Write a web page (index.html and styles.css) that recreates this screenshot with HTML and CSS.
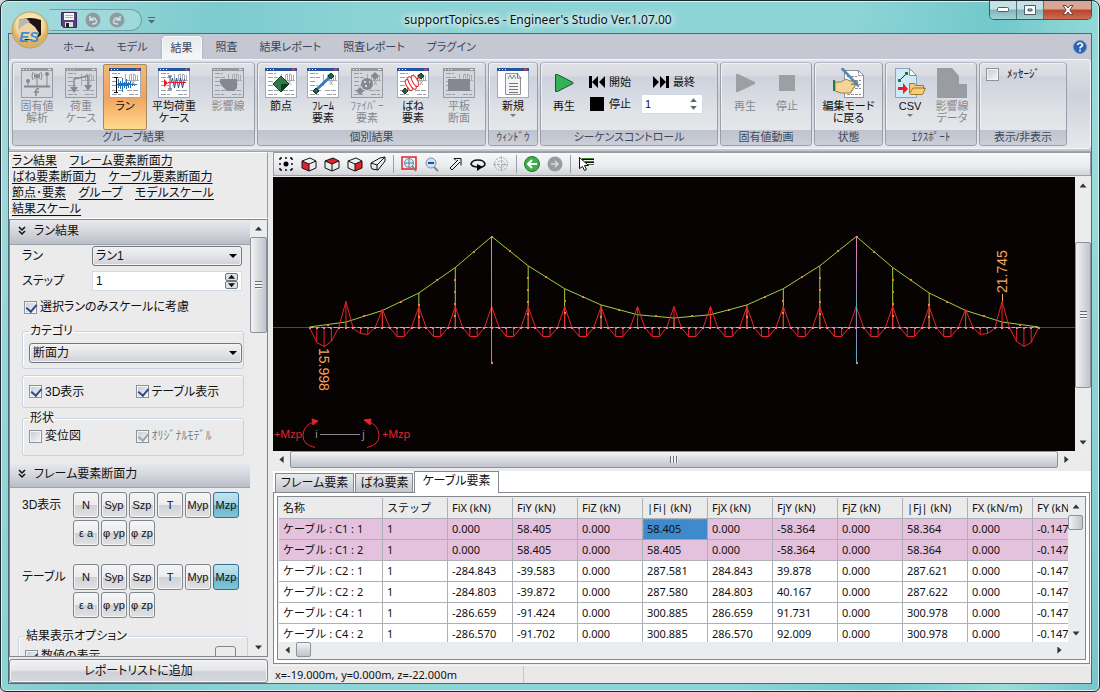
FILE: index.html
```
<!DOCTYPE html>
<html lang="ja">
<head>
<meta charset="UTF-8">
<title>supportTopics.es - Engineer's Studio Ver.1.07.00</title>
<link rel="stylesheet" href="styles.css">
</head>
<body>
<svg class="defs" aria-hidden="true">
    <defs>
        <symbol id="sheet" viewBox="0 0 32 30">
            <rect x=".5" y=".5" width="31" height="29" fill="#fff" stroke="#a3aab5"/>
            <rect width="32" height="3" fill="#24539f"/>
            <path d="M2 1.5h1M5 1.5h1M8 1.5h1" stroke="#fff"/>
            <path d="M27 1.5h3" stroke="#e8413c" stroke-width="2"/>
        </symbol>
        <symbol id="sheet-off" viewBox="0 0 32 30">
            <rect x=".5" y=".5" width="31" height="29" fill="#d4d7dd" stroke="#989ba0"/>
            <rect width="32" height="3" fill="#96999f"/>
            <path d="M2 1.5h1M5 1.5h1M8 1.5h1M27 1.5h3" stroke="#e8eaee"/>
        </symbol>
        <symbol id="notes" viewBox="0 0 32 30">
            <path d="M3 5.5h8M3 9.5h10M3 13.5h6M3 17.5h8M3 22.5h12M3 26.5h9M18 22.5h11M20 26.5h9" stroke="#9aa0a8" stroke-dasharray="5 1"/>
            <path d="M16.500 6v12M16 12.500h14M20.500 12V7l2-1v6M24.500 12V6l2 1v5M28.500 12V7M22 12l4 5M26 12l-3 5" stroke="#a6abb2" fill="none"/>
        </symbol>
        <symbol id="cube" viewBox="0 0 16 16">
            <path d="M1 5l8-3 6 3v7l-7 3-7-3zM1 5l7 3 7-3M8 8v7" fill="none" stroke="#111"/>
        </symbol>
        <symbol id="chevrons" viewBox="0 0 8 10">
            <path d="M1 1l3 3 3-3M1 5l3 3 3-3" fill="none" stroke="#111" stroke-width="1.5"/>
        </symbol>
    </defs>
</svg>
<div class="window">
    <header class="titlebar">
        <div class="quick">
            <button class="orb" title="メニュー">
                <svg width="38" height="38" viewBox="0 0 38 38">
                    <defs>
                        <radialGradient id="gold" cy=".35"><stop offset="0" stop-color="#fff6d0"/><stop offset=".75" stop-color="#f3dc9c"/><stop offset="1" stop-color="#dcb064"/></radialGradient>
                    </defs>
                    <circle cx="19" cy="19" r="18" fill="url(#gold)" stroke="#b6a06c"/>
                    <path d="M8 9q11-4 22 0v15q-5 5-16 5-6-8-6-20z" fill="#1e1312"/>
                    <path d="M7 19q1-8 8-9l4 2 5 4 4 6-3 6H10z" fill="#f0d3a4"/>
                    <path d="M8 9l7-2 4 4-6 3-6 5z" fill="#b9b6b3"/>
                    <text x="8" y="31" class="orb-text">ES</text>
                </svg>
            </button>
            <div class="quick-bar">
                <button title="保存"><svg width="16" height="16" viewBox="0 0 16 16"><path d="M.5.5h15v15h-13l-2-2z" fill="#5a3f7a" stroke="#3d2759"/><path d="M3 1h10v7H3z" fill="#f4fbf4"/><path d="M4 3.500h8M4 5.500h8" stroke="#81c995"/><path d="M4 10h8v5H4z" fill="#dcdce6"/><path d="M5 11h3v4H5z" fill="#222"/></svg></button>
                <button title="元に戻す" disabled><svg width="16" height="16" viewBox="0 0 16 16"><circle cx="8" cy="8" r="7.500" fill="#8f9ba1"/><path d="M5 4v4h4M5 8q4-4 6 0t-4 4" fill="none" stroke="#c9e4e6" stroke-width="1.500"/></svg></button>
                <button title="やり直し" disabled><svg width="16" height="16" viewBox="0 0 16 16"><circle cx="8" cy="8" r="7.500" fill="#8f9ba1"/><path d="M11 4v4H7M11 8q-4-4-6 0t4 4" fill="none" stroke="#c9e4e6" stroke-width="1.500"/></svg></button>
            </div>
            <svg width="7" height="8" viewBox="0 0 7 8"><path d="M0 1.500h7" stroke="#526b70"/><path d="M0 4h7l-3.500 3.500z" fill="#526b70"/></svg>
        </div>
        <h1 class="title">supportTopics.es - Engineer's Studio Ver.1.07.00</h1>
        <div class="controls">
            <button title="最小化"><svg width="12" height="6" viewBox="0 0 12 6"><rect x=".5" y=".5" width="11" height="4" rx="1" fill="#fff" stroke="#4b5d66"/></svg></button>
            <button title="最大化"><svg width="12" height="10" viewBox="0 0 12 10"><path d="M.5.5h11v9H.5zM4 4v2h4V4z" fill="#fff" fill-rule="evenodd" stroke="#4b5d66"/></svg></button>
            <button class="close" title="閉じる"><svg width="12" height="10" viewBox="0 0 12 10"><path d="M1 .5h3l2 2.500 2-2.500h3L7.800 5l3.200 4.500H8L6 7 4 9.500H1L4.200 5z" fill="#fff" stroke="#6b4340"/></svg></button>
        </div>
    </header>

    <div class="client">
        <nav class="tabs">
            <button>ホーム</button>
            <button>モデル</button>
            <button class="active">結果</button>
            <button>照査</button>
            <button>結果レポート</button>
            <button>照査レポート</button>
            <button>プラグイン</button>
            <button class="help" title="ヘルプ"><svg width="14" height="14" viewBox="0 0 14 14"><circle cx="7" cy="7" r="6.500" fill="#2a62b4" stroke="#6d8fbe"/><path d="M4.500 5q.5-2 2.500-2t2.500 2q0 1-1.500 1.800Q7 7.300 7 8.500M7 9.800v1.700" fill="none" stroke="#fff" stroke-width="1.700"/></svg></button>
        </nav>

        <div class="ribbon">
            <section class="group g-group">
                <div class="tools">
                    <button class="tool" disabled>
                        <svg viewBox="0 0 32 30"><use href="#sheet-off"/><g fill="none" stroke="#85888e"><path d="M3 18.500h26" stroke-width="2"/><path d="M7 18v-5M16 18V8M26 18V6M12 12q-2-4 0-8M20 12q2-4 0-8M14 11q-1-3 0-6M18 11q1-3 0-6"/><path d="M18 21q-3-1-3 2v5M13 24h5" stroke-width="1.500"/></g><g fill="#85888e"><circle cx="7" cy="13" r="2"/><circle cx="16" cy="8" r="2"/><circle cx="26" cy="6" r="2"/></g></svg>
                        <span>固有値<br>解析</span>
                    </button>
                    <button class="tool" disabled>
                        <svg viewBox="0 0 32 30"><use href="#sheet-off"/><use href="#notes"/><path d="M9 23V11l14-3v11" fill="none" stroke="#85888e" stroke-width="1.500"/><path d="M5 19h8l-4 6zM19 17h8l-4 6z" fill="#85888e"/></svg>
                        <span>荷重<br>ケース</span>
                    </button>
                    <button class="tool on">
                        <svg viewBox="0 0 32 30"><use href="#sheet"/><use href="#notes"/><path d="M5 9.500h4M5 24.500h4M7.500 9v16" stroke="#111"/><path d="M9.500 11v9M11.500 13v8M13.500 10v14M15.500 14v6M17.500 11v10M19.500 14v6M21.500 13v7M23.500 15v3M25.500 16v2" stroke="#2371b8"/><path d="M8 16.500h20M10 15.500h12M10 17.500h10" stroke="#2371b8"/></svg>
                        <span>ラン</span>
                    </button>
                    <button class="tool wide">
                        <svg viewBox="0 0 32 30"><use href="#sheet"/><use href="#notes"/><path d="M10 8h4M12 8v13M10 21h4" stroke="#34507c"/><path d="M13 15l1.500-5 2 10 2-10 2 10 2-10 2 10 2-9" fill="none" stroke="#2b4fa0"/><path d="M6 11v8l4-4z" fill="#ed1c24"/><path d="M10 14.500h18" stroke="#ed1c24"/></svg>
                        <span>平均荷重<br>ケース</span>
                    </button>
                    <button class="tool" disabled>
                        <svg viewBox="0 0 32 30"><use href="#sheet-off"/><use href="#notes"/><path d="M8 11h17v9l-3 3h-7l-4-4-3-4z" fill="#85888e"/></svg>
                        <span>影響線</span>
                    </button>
                </div>
                <h2>グループ結果</h2>
            </section>

            <section class="group g-each">
                <div class="tools">
                    <button class="tool">
                        <svg viewBox="0 0 32 30"><use href="#sheet"/><use href="#notes"/><path d="M16 8l8 8-8 8-8-8z" fill="#2d7a46" stroke="#17452a"/><path d="M16 16h8l-8 8z" fill="#123a20"/></svg>
                        <span>節点</span>
                    </button>
                    <button class="tool">
                        <svg viewBox="0 0 32 30"><use href="#sheet"/><use href="#notes"/><path d="M8 23L24 8" stroke="#3579c4" stroke-width="3"/><path d="M9 20l3 3-3 3-3-3zM24 5l3 3-3 3-3-3z" fill="#1f6337" stroke="#123a20"/></svg>
                        <span>ﾌﾚｰﾑ<br>要素</span>
                    </button>
                    <button class="tool" disabled>
                        <svg viewBox="0 0 32 30"><use href="#sheet-off"/><use href="#notes"/><g fill="#85888e"><circle cx="16" cy="16" r="6"/><path d="M9 19l4 4-4 4-4-4zM24 4l4 4-4 4-4-4z"/></g><path d="M13 14h2M18 14h1M14 18h2" stroke="#d4d7dd" stroke-width="2"/></svg>
                        <span>ﾌｧｲﾊﾞｰ<br>要素</span>
                    </button>
                    <button class="tool">
                        <svg viewBox="0 0 32 30"><use href="#sheet"/><use href="#notes"/><path d="M8 20l3 3-3 3-3-3zM24 5l3 3-3 3-3-3z" fill="#1f6337" stroke="#123a20"/><g fill="#fff" stroke="#ed1c24"><ellipse cx="12" cy="17" rx="2.500" ry="6" transform="rotate(-30 12 17)"/><ellipse cx="15" cy="15" rx="2.500" ry="7" transform="rotate(-30 15 15)"/><ellipse cx="18" cy="13" rx="2.500" ry="6" transform="rotate(-30 18 13)"/></g><path d="M9 22l3-2M20 11l3-2" stroke="#ed1c24" stroke-width="1.500"/></svg>
                        <span>ばね<br>要素</span>
                    </button>
                    <button class="tool" disabled>
                        <svg viewBox="0 0 32 30"><use href="#sheet-off"/><use href="#notes"/><path d="M5 11h22v12H5z" fill="#85888e"/></svg>
                        <span>平板<br>断面</span>
                    </button>
                </div>
                <h2>個別結果</h2>
            </section>

            <section class="group g-window">
                <div class="tools">
                    <button class="tool">
                        <svg viewBox="0 0 32 30"><use href="#sheet"/><path d="M8.500 5.500h12l3 4v17h-15z" fill="#f3f3f3" stroke="#8d9299"/><path d="M11 11l2-4 2 4 2-4 2 4" fill="none" stroke="#888"/><path d="M20.500 5v5h4M12 15.500h9M12 18.500h9M12 21.500h9M12 24.500h9" stroke="#777" fill="none"/></svg>
                        <span>新規</span>
                        <i class="drop"></i>
                    </button>
                </div>
                <h2>ｳｨﾝﾄﾞｳ</h2>
            </section>

            <section class="group g-sequence">
                <div class="tools">
                    <button class="tool">
                        <svg viewBox="0 0 32 30"><path d="M7.500 6.500v17h2L25 15.500v-1L9.500 6.500z" fill="#35b257" stroke="#17552a"/></svg>
                        <span>再生</span>
                    </button>
                    <div class="seq-grid">
                        <button class="mini"><svg width="16" height="12" viewBox="0 0 16 12"><path d="M0 0h3v12H0zM9 0v12L3 6zM16 0v12l-6-6z"/></svg>開始</button>
                        <button class="mini"><svg width="16" height="12" viewBox="0 0 16 12"><path d="M13 0h3v12h-3zM0 0v12l6-6zM7 0v12l6-6z"/></svg>最終</button>
                        <button class="mini"><svg width="16" height="14" viewBox="0 0 16 14"><path d="M1 0h14v14H1z"/></svg>停止</button>
                        <div class="spin">
                            <input type="text" value="1" aria-label="シーケンス番号">
                            <span class="arrows"><button title="増やす"></button><button title="減らす"></button></span>
                        </div>
                    </div>
                </div>
                <h2>シーケンスコントロール</h2>
            </section>

            <section class="group g-eigen">
                <div class="tools">
                    <button class="tool" disabled>
                        <svg viewBox="0 0 32 30"><path d="M7 6v18h2l17-8v-2L9 6z" fill="#9c9fa4"/></svg>
                        <span>再生</span>
                    </button>
                    <button class="tool" disabled>
                        <svg viewBox="0 0 32 30"><path d="M8 7h16v16H8z" fill="#9c9fa4"/></svg>
                        <span>停止</span>
                    </button>
                </div>
                <h2>固有値動画</h2>
            </section>

            <section class="group g-state">
                <div class="tools">
                    <button class="tool">
                        <svg viewBox="0 0 32 30"><path d="M11.500 2.500h14l5 5v22h-19z" fill="#fff" stroke="#8d9299"/><path d="M25.500 2.500v5h5M14 8.500h10M14 12.500h14M22 16.500h6M22 20.500h6M14 26.500h14" stroke="#8a8f96" stroke-dasharray="3 1" fill="none"/><path d="M2 14h6l5-3 4 2h7l1 2-5 1h-2l4 1v2l-2 1v2l-2 1v2H8l-6-2z" fill="#f5d499" stroke="#a37b43"/><path d="M0 12h2v11H0z" fill="#2b7a3c"/><path d="M8 1l16 17 2 1-1-3L10 0z" fill="#4f8fc0" stroke="#2f5f88" stroke-width=".5"/></svg>
                        <span>編集モード<br>に戻る</span>
                    </button>
                </div>
                <h2>状態</h2>
            </section>

            <section class="group g-export">
                <div class="tools">
                    <button class="tool">
                        <svg viewBox="0 0 32 30"><path d="M1.500.5h14l7 7v22h-21z" fill="#cfe9f7" stroke="#8aa5b8"/><path d="M15.500.5v7h7z" fill="#fff" stroke="#7d8d99"/><path d="M5 13l8-8" stroke="#222"/><path d="M4 11h3v3H4zM11 4h3v3h-3z" fill="#1f7a3c"/><path d="M4 19h5v-4l5 6-5 5v-4H4z" fill="#ed1c24"/><path d="M15.500 25.500v-10h5l1 2h8v3h2l-3 6h-12z" fill="#f4cb76" stroke="#a37730"/><path d="M16 25l3-5h12" fill="none" stroke="#a37730"/></svg>
                        <span>CSV</span>
                        <i class="drop"></i>
                    </button>
                    <button class="tool" disabled>
                        <svg viewBox="0 0 32 30"><path d="M1 0h15l7 8v8h8v14H1z" fill="#999ca1"/></svg>
                        <span>影響線<br>データ</span>
                    </button>
                </div>
                <h2>ｴｸｽﾎﾟｰﾄ</h2>
            </section>

            <section class="group g-show">
                <div class="tools">
                    <label class="check"><input type="checkbox">ﾒｯｾｰｼﾞ</label>
                </div>
                <h2>表示/非表示</h2>
            </section>
        </div>

        <div class="workspace">
            <aside class="side">
                <nav class="links">
                    <a href="#run">ラン結果</a> <a href="#frame">フレーム要素断面力</a><br>
                    <a href="#spring">ばね要素断面力</a> <a href="#cable">ケーブル要素断面力</a><br>
                    <a href="#node">節点･要素</a> <a href="#group">グループ</a> <a href="#modelscale">モデルスケール</a><br>
                    <a href="#resultscale">結果スケール</a>
                </nav>
                <div class="side-scroll">
                    <div class="side-content">
                        <h3 id="run"><svg width="8" height="10"><use href="#chevrons"/></svg>ラン結果</h3>
                        <div class="panel">
                            <div class="field">
                                <label for="runSelect">ラン</label>
                                <select id="runSelect"><option>ラン1</option></select>
                            </div>
                            <div class="field">
                                <label for="step">ステップ</label>
                                <div class="spin">
                                    <input type="text" id="step" value="1">
                                    <span class="arrows"><button title="増やす"></button><button title="減らす"></button></span>
                                </div>
                            </div>
                            <label class="check scale"><input type="checkbox" checked>選択ランのみスケールに考慮</label>
                            <fieldset>
                                <legend>カテゴリ</legend>
                                <select aria-label="カテゴリ"><option>断面力</option></select>
                            </fieldset>
                            <fieldset class="pair plain">
                                <label class="check"><input type="checkbox" checked>3D表示</label>
                                <label class="check"><input type="checkbox" checked>テーブル表示</label>
                            </fieldset>
                            <fieldset class="pair shape">
                                <legend>形状</legend>
                                <label class="check"><input type="checkbox">変位図</label>
                                <label class="check off"><input type="checkbox" checked disabled>ｵﾘｼﾞﾅﾙﾓﾃﾞﾙ</label>
                            </fieldset>
                        </div>
                        <h3 id="frame"><svg width="8" height="10"><use href="#chevrons"/></svg>フレーム要素断面力</h3>
                        <div class="forces">
                            <span>3D表示</span>
                            <div class="keys">
                                <button>N</button><button>Syp</button><button>Szp</button><button>T</button><button>Myp</button><button class="on">Mzp</button>
                                <button>ε a</button><button>φ yp</button><button>φ zp</button>
                            </div>
                            <span>テーブル</span>
                            <div class="keys">
                                <button>N</button><button>Syp</button><button>Szp</button><button>T</button><button>Myp</button><button class="on">Mzp</button>
                                <button>ε a</button><button>φ yp</button><button>φ zp</button>
                            </div>
                        </div>
                        <fieldset class="options">
                            <legend>結果表示オプション</legend>
                            <label class="check"><input type="checkbox" checked>数値の表示</label>
                            <button class="small" title="設定"></button>
                        </fieldset>
                    </div>
                    <div class="vbar">
                        <button class="up" title="上へ"></button>
                        <div class="track"><div class="thumb side-thumb"></div></div>
                        <button class="down" title="下へ"></button>
                    </div>
                </div>
                <button class="add">レポートリストに追加</button>
            </aside>

            <main class="main">
                <div class="toolbar">
                    <button title="全体表示"><svg viewBox="0 0 16 16"><path d="M2 2h2M7 2h2M12 2h2M2 14h2M7 14h2M12 14h2M2 2v2M2 7v2M2 12v2M14 2v2M14 7v2M14 12v2" stroke="#111" stroke-width="1.500"/><circle cx="8" cy="8" r="2.500"/></svg></button>
                    <button title="正面"><svg viewBox="0 0 16 16"><path d="M1 5l7 3v7l-7-3z" fill="#e8202a"/><use href="#cube"/></svg></button>
                    <button title="上面"><svg viewBox="0 0 16 16"><path d="M1 5l8-3 6 3-7 3z" fill="#e8202a"/><use href="#cube"/></svg></button>
                    <button title="側面"><svg viewBox="0 0 16 16"><path d="M8 8l7-3v7l-7 3z" fill="#e8202a"/><use href="#cube"/></svg></button>
                    <button title="透視"><svg viewBox="0 0 16 16"><path d="M1 7l9-5 5-1v4l-7 9-6-1-1-2zM1 7l6 2 8-8M7 9v5" fill="none" stroke="#111"/></svg></button>
                    <i class="sep"></i>
                    <button title="範囲拡大"><svg viewBox="0 0 16 16"><path d="M1 1h14v12H1z" fill="none" stroke="#e8202a" stroke-width="1.500"/><circle cx="8" cy="7" r="4.500" fill="#d9eaf5" stroke="#6c8597"/><path d="M8 3v8M4 7h8" stroke="#4e7aa3"/><path d="M11 10l4 5" stroke="#8b7d6e" stroke-width="2"/></svg></button>
                    <button title="縮小"><svg viewBox="0 0 16 16"><circle cx="7" cy="7" r="5" fill="#cfe3f3" stroke="#7995ab"/><path d="M4 7h6" stroke="#1f4fa0" stroke-width="2"/><path d="M10 11l4 4" stroke="#7d8790" stroke-width="2"/></svg></button>
                    <button title="移動"><svg viewBox="0 0 16 16"><path d="M3 12l8-8M5 14l8-8M3 12l2 2M7 2.500h7v7M7 2.500l2 2" fill="none" stroke="#111"/></svg></button>
                    <button title="回転"><svg viewBox="0 0 16 16"><path d="M8 11q-6 0-7-3 1-4 7-4t7 4q0 2-3 3" fill="none" stroke="#111" stroke-width="1.500"/><path d="M7 8v7l6-4z"/></svg></button>
                    <button title="中心" disabled><svg viewBox="0 0 16 16"><g fill="none" stroke="#aaaeb4" stroke-dasharray="3 1"><circle cx="8" cy="8" r="6.500"/><circle cx="8" cy="8" r="3.500"/><path d="M8.500 0v16M0 8.500h16"/></g></svg></button>
                    <i class="sep"></i>
                    <button title="戻る"><svg viewBox="0 0 16 16"><circle cx="8" cy="8" r="7.500" fill="#3daf4a" stroke="#1f7a31"/><path d="M8 4L4 8l4 4M4 8h9" fill="none" stroke="#fff" stroke-width="2"/></svg></button>
                    <button title="進む" disabled><svg viewBox="0 0 16 16"><circle cx="8" cy="8" r="7.500" fill="#989b9f"/><path d="M8 5l3 3-3 3M4 8h7" fill="none" stroke="#d9dbde" stroke-width="1.500"/></svg></button>
                    <i class="sep"></i>
                    <button title="選択"><svg viewBox="0 0 16 16"><path d="M4 2.500h12M7 5.500h9M10 8.500h6" stroke="#3f7b2c"/><path d="M4 3.500h12M7 6.500h9" stroke="#111"/><path d="M1.500 1.500v11l3-2 2 4 2-1-2-4h4z" fill="#fff" stroke="#111"/></svg></button>
                </div>

                <div class="view">
                    <svg id="model" class="model" viewBox="0 0 802 274">
                        <defs>
                            <linearGradient id="pylon" x2="0" y2="1"><stop offset="0" stop-color="#e884b4"/><stop offset=".35" stop-color="#a77fc0"/><stop offset=".55" stop-color="#5fa8b0"/><stop offset=".7" stop-color="#a77fc0"/><stop offset="1" stop-color="#45b4c4"/></linearGradient>
                        </defs>
                        <path class="axis" d="M0 150.500h802"/>
                        <g id="bridge"></g>
                        <text class="value" transform="translate(46 171) rotate(90)">15.998</text>
                        <text class="value" transform="translate(734 116) rotate(-90)">21.745</text>
                        <path class="peak-line" d="M729.500 117v7"/>
                        <g class="sign">
                            <text x="1" y="261">+Mzp</text>
                            <path d="M42 244.500q-11 3-12 13t12 13M95 244.500q10 3 11 13t-12 13"/>
                            <path class="tip" d="M39 242l6 2-5 4zM98 242l-7 1 6 5z"/>
                            <path class="member" d="M47 257.500h40"/>
                            <text class="end" x="42" y="261">i</text>
                            <text class="end" x="89" y="261">j</text>
                            <text x="109" y="261">+Mzp</text>
                        </g>
                    </svg>
                    <div class="vbar">
                        <button class="up" title="上へ"></button>
                        <div class="track"><div class="thumb view-thumb"></div></div>
                        <button class="down" title="下へ"></button>
                    </div>
                    <div class="hbar">
                        <button class="left" title="左へ"></button>
                        <div class="track"><div class="thumb"></div></div>
                        <button class="right" title="右へ"></button>
                    </div>
                </div>

                <div class="results">
                    <div class="result-tabs">
                        <button>フレーム要素</button>
                        <button>ばね要素</button>
                        <button class="active">ケーブル要素</button>
                    </div>
                    <div class="sheet-frame">
                        <div class="sheet">
                            <div class="table-clip">
                                <table>
                                    <thead>
                                        <tr><th class="name">名称</th><th>ステップ</th><th>FiX (kN)</th><th>FiY (kN)</th><th>FiZ (kN)</th><th>|Fi| (kN)</th><th>FjX (kN)</th><th>FjY (kN)</th><th>FjZ (kN)</th><th>|Fj| (kN)</th><th>FX (kN/m)</th><th>FY (kN/m)</th></tr>
                                    </thead>
                                    <tbody>
                                        <tr class="pink"><td>ケーブル : C1 : 1</td><td>1</td><td>0.000</td><td>58.405</td><td>0.000</td><td class="selected">58.405</td><td>0.000</td><td>-58.364</td><td>0.000</td><td>58.364</td><td>0.000</td><td>-0.147</td></tr>
                                        <tr class="pink"><td>ケーブル : C1 : 2</td><td>1</td><td>0.000</td><td>58.405</td><td>0.000</td><td>58.405</td><td>0.000</td><td>-58.364</td><td>0.000</td><td>58.364</td><td>0.000</td><td>-0.147</td></tr>
                                        <tr><td>ケーブル : C2 : 1</td><td>1</td><td>-284.843</td><td>-39.583</td><td>0.000</td><td>287.581</td><td>284.843</td><td>39.878</td><td>0.000</td><td>287.621</td><td>0.000</td><td>-0.147</td></tr>
                                        <tr><td>ケーブル : C2 : 2</td><td>1</td><td>-284.803</td><td>-39.872</td><td>0.000</td><td>287.580</td><td>284.803</td><td>40.167</td><td>0.000</td><td>287.622</td><td>0.000</td><td>-0.147</td></tr>
                                        <tr><td>ケーブル : C4 : 1</td><td>1</td><td>-286.659</td><td>-91.424</td><td>0.000</td><td>300.885</td><td>286.659</td><td>91.731</td><td>0.000</td><td>300.978</td><td>0.000</td><td>-0.147</td></tr>
                                        <tr><td>ケーブル : C4 : 2</td><td>1</td><td>-286.570</td><td>-91.702</td><td>0.000</td><td>300.885</td><td>286.570</td><td>92.009</td><td>0.000</td><td>300.978</td><td>0.000</td><td>-0.147</td></tr>
                                    </tbody>
                                </table>
                            </div>
                            <div class="vbar">
                                <button class="up" title="上へ"></button>
                                <div class="track"><div class="thumb short"></div></div>
                                <button class="down" title="下へ"></button>
                            </div>
                            <div class="hbar">
                                <button class="left" title="左へ"></button>
                                <div class="track"><div class="thumb short"></div></div>
                                <button class="right" title="右へ"></button>
                            </div>
                        </div>
                    </div>
                </div>

                <footer class="status"><span>x=-19.000m, y=0.000m, z=-22.000m</span></footer>
            </main>
        </div>
    </div>
</div>
<script src="bridge.js"></script>
</body>
</html>
```
FILE: bridge.js
```
// Suspension bridge: 20 bays, pylons at hangers 5 and 15
const BAYS = 20;
const LEFT = 36.5;
const BAY = 36.45;
const DECK = 150.5;
const SIDE_CABLE = [150, 145, 133.5, 116, 90.5, 59.5];

// moment ordinates at the fifth points of a bay, without the peaks
function troughOf(bay) {
    const n = Math.min(bay, BAYS - 1 - bay);
    if (n === 0) return bay === 0 ? [15, 19, 14, 0] : [0, 14, 19, 15];
    if (n === 1) return bay === 1 ? [1, 6, 7, 0] : [0, 7, 6, 1];
    return [0, 9, 9, 0];
}

function peakOf(k) {
    const n = Math.min(k, BAYS - k);
    if (n === 0) return 0;
    return n === 1 ? -26 : n === 2 ? -18 : -21;
}

function cableY(k) {
    const n = Math.min(k, BAYS - k);
    if (n <= 5) return SIDE_CABLE[n];
    return 141 - 81.5 * Math.pow((10 - n) / 5, 2);
}

function dot(x, y, cls) {
    return `<rect class="${cls}" x="${Math.round(x - 1)}" y="${Math.round(y - 1)}" width="2" height="2"/>`;
}

function drawBridge() {
    let cable = '';
    let moment = '';
    let ribs = '';
    let hangers = '';
    let dots = '';

    for (let k = 0; k <= BAYS; k++) {
        const x = LEFT + k * BAY;
        const y = cableY(k);
        cable += `${x},${y} `;
        moment += `${x},${DECK + peakOf(k)} `;
        ribs += `M${x} ${DECK}v${peakOf(k)}`;
        dots += dot(x, DECK, 'node');
        if (k !== 5 && k !== 15) {
            hangers += `M${x} ${y}V${DECK}`;
            for (let h = y + 12; h < DECK - 5; h += 12) dots += dot(x, h, 'joint');
        }
        if (k === BAYS) break;
        dots += dot(x + BAY / 2, (y + cableY(k + 1)) / 2, 'joint');
        troughOf(k).forEach((m, i) => {
            const mx = x + (i + 1) * BAY / 5;
            moment += `${mx},${DECK + m} `;
            ribs += `M${mx} ${DECK}v${m}`;
            dots += dot(mx, DECK, 'node');
        });
    }

    const pylons = [5, 15].map(k => {
        const x = Math.floor(LEFT + k * BAY);
        return `<rect x="${x}" y="60" width="1" height="126" fill="url(#pylon)"/>` + dot(x + 1, 60, 'node') + dot(x + 1, 186, 'node');
    }).join('');

    document.getElementById('bridge').innerHTML =
        `<path class="cable" d="${hangers}"/><polyline class="cable" points="${cable}"/>` +
        `<path class="moment" d="${ribs}"/><polyline class="moment" points="${moment}"/>` +
        `<path class="deck" d="M${LEFT} ${DECK}H${LEFT + BAYS * BAY}"/>` + pylons + dots;
}

drawBridge();
```
FILE: styles.css
```
* {
    box-sizing: border-box;
}
body {
    margin: 0;
    background: #cfd8da;
    color: #111;
    font: 12px/16px "Liberation Sans", "Noto Sans CJK JP", sans-serif;
    font-feature-settings: "palt";
}
button, input, select {
    font: inherit;
    color: inherit;
    margin: 0;
    padding: 0;
}
button {
    border: 0;
    background: none;
    white-space: nowrap;
}
h1, h2, h3 {
    margin: 0;
    font-weight: normal;
    font-size: inherit;
}
svg {
    flex: none;
}
.defs {
    position: absolute;
    width: 0;
    height: 0;
}
.window {
    display: flex;
    flex-direction: column;
    height: 100vh;
    padding: 0 7px 7px;
    border: 1px solid #1c282e;
    border-radius: 8px 8px 6px 6px;
    background: linear-gradient(100deg, #a5dadb 0, #7ccbce 18%, #8bd3d5 30%, #8dd4d6 70%, #72c8ca 82%, #9adcdc 92%, #76c6cb 100%);
    box-shadow: inset 0 0 0 1px #d8f3f3;
    overflow: hidden;
}

/* title bar */
.titlebar {
    display: grid;
    grid-template-columns: 1fr auto 1fr;
    height: 32px;
    flex: none;
}
.quick {
    display: flex;
    align-items: center;
    gap: 6px;
    padding-left: 41px;
    height: 38px;
    position: relative;
}
.orb {
    position: absolute;
    left: 3px;
    top: 10px;
    height: 38px;
    z-index: 1;
}
.orb-text {
    font: italic bold 15px "Liberation Sans", sans-serif;
    fill: #3f8fd0;
}
.quick-bar {
    display: flex;
    align-items: center;
    gap: 8px;
    height: 22px;
    padding: 0 16px 0 11px;
    border: 1px solid #6aa4a8;
    border-left-color: transparent;
    border-radius: 0 11px 11px 0;
    background: #a0d9db;
}
.quick-bar button {
    height: 16px;
}
.title {
    padding: 8px 24px 0 0;
    font: 12px/22px "Noto Sans", "Noto Sans CJK JP", sans-serif;
    text-shadow: 0 0 6px #fff, 0 0 8px #fff, 0 0 10px #fff;
}
.controls {
    display: flex;
    justify-self: end;
    height: 19px;
    border: 1px solid #3f585f;
    border-top: 0;
    border-radius: 0 0 5px 5px;
    overflow: hidden;
}
.controls button {
    display: flex;
    align-items: center;
    justify-content: center;
    width: 27px;
    border-right: 1px solid #557077;
    background: linear-gradient(#c3e2e4 45%, #83b3b8 50%, #a4d3d5);
}
.controls .close {
    width: 47px;
    border: 0;
    background: linear-gradient(#dba594 45%, #b4452f 50%, #cf6c4e);
}

/* ribbon */
.client {
    display: flex;
    flex-direction: column;
    flex: 1;
    min-height: 0;
    border: 1px solid #4f6a72;
    background: #c5c8d3;
}
.tabs {
    display: flex;
    height: 25px;
    flex: none;
    padding-left: 43px;
    font-size: 11px;
    color: #39465a;
}
.tabs button {
    padding: 0 11px;
}
.tabs .active {
    padding: 0 8px;
    margin: 2px 3px 0;
    border: 1px solid #f6fbfc;
    border-bottom: 0;
    border-radius: 4px 4px 0 0;
    background: linear-gradient(#e6e9ee, #f5f6f8);
    box-shadow: 0 0 2px #7b9ba4;
}
.tabs .help {
    margin-left: auto;
    padding: 4px 4px 0;
}
.ribbon {
    display: flex;
    gap: 2px;
    flex: none;
    height: 90px;
    padding: 2px;
    border: 1px solid #f6f7f9;
    border-radius: 3px;
    background: linear-gradient(#dfe2e8, #cdd1da 40%, #e6e9ec);
}
.group {
    display: flex;
    flex-direction: column;
    flex: none;
    border: 1px solid #9a9ea8;
    border-top-color: #b4b8c2;
    border-radius: 4px;
    background: linear-gradient(#e0e2e8 0, #d9dbe1 15%, #cdd2de 17%, #dfe2e6 60%, #e9ebec);
    box-shadow: inset 1px 1px 0 #f1f2f5;
    overflow: hidden;
}
.group h2 {
    flex: none;
    height: 15px;
    background: linear-gradient(#bfc3cd, #cccfd8);
    color: #3d495b;
    font-size: 11px;
    text-align: center;
    line-height: 14px;
}
.g-group {
    width: 243px;
}
.g-each {
    width: 229px;
}
.g-window {
    width: 50px;
}
.g-sequence {
    width: 178px;
}
.g-eigen {
    width: 92px;
}
.g-state {
    width: 69px;
}
.g-export {
    width: 92px;
}
.g-show {
    width: 88px;
}
.tools {
    display: flex;
    flex: 1;
    justify-content: center;
    padding-top: 1px;
    font-size: 11px;
    line-height: 12px;
}
.tool {
    display: flex;
    flex-direction: column;
    align-items: center;
    gap: 2px;
    min-width: 42px;
    height: 66px;
    padding-top: 3px;
    border: 1px solid transparent;
    border-radius: 2px;
}
.g-group .tools, .g-each .tools, .g-sequence .tools {
    justify-content: flex-start;
    padding-left: 2px;
}
.g-group .tool {
    min-width: 44px;
}
.g-group .wide, .g-group .tool:last-child {
    min-width: 54px;
}
.g-each .tool:nth-child(n+3) {
    min-width: 46px;
}
.tool svg {
    width: 32px;
    height: 30px;
}
.tool:disabled {
    color: #86898f;
}
.tool.on {
    border-color: #a58a5e;
    background: linear-gradient(#f3b877, #f0a361 50%, #ffd98a);
}
.drop {
    border: 3px solid transparent;
    border-top: 3px solid #777;
}
.seq-grid {
    display: grid;
    grid-template-columns: 52px 62px;
    gap: 2px 0;
    padding: 8px 0 0 4px;
    height: 48px;
}
.mini {
    display: flex;
    align-items: center;
    gap: 4px;
    height: 20px;
}
.mini:nth-child(2) {
    padding-left: 12px;
}
.spin {
    display: flex;
    border: 1px solid #d3dae8;
    background: #fff;
}
.spin input {
    flex: 1;
    width: 0;
    padding-left: 3px;
    border: 0;
    background: none;
    outline: 0;
}
.arrows {
    display: flex;
    flex-direction: column;
    justify-content: space-evenly;
    padding: 0 4px;
}
.arrows button {
    display: flex;
    align-items: center;
    justify-content: center;
    width: 9px;
    height: 5px;
}
.arrows button::after {
    content: "";
    width: 7px;
    height: 4px;
    background: #5c6670;
    clip-path: polygon(50% 0, 100% 100%, 0 100%);
}
.arrows button + button::after {
    clip-path: polygon(0 0, 100% 0, 50% 100%);
}

/* check boxes and drop-downs */
.check {
    display: flex;
    align-items: center;
    gap: 3px;
    height: 16px;
    white-space: nowrap;
}
.check input {
    appearance: none;
    flex: none;
    width: 13px;
    height: 13px;
    border: 1px solid #8b9299;
    background: linear-gradient(135deg, #c4cad2, #f7f8f9);
    box-shadow: inset 0 0 0 1px #f3f4f5;
}
.check input:checked::after {
    content: "";
    display: block;
    width: 5px;
    height: 8px;
    margin: 0 0 0 3px;
    border: solid #2e4a86;
    border-width: 0 2px 2px 0;
    transform: rotate(40deg);
}
.check input:disabled::after {
    border-color: #a0a4a9;
}
.check.off {
    color: #7b8791;
}
.g-show .tools {
    justify-content: flex-start;
    padding: 3px 0 0 6px;
}
.g-show .check {
    gap: 8px;
}
select {
    appearance: none;
    width: 150px;
    height: 20px;
    padding: 0 3px;
    border: 1px solid #70777e;
    border-radius: 3px;
    background: url("data:image/svg+xml,%3Csvg xmlns='http://www.w3.org/2000/svg' width='8' height='4'%3E%3Cpath d='M0 0h8L4 4z'/%3E%3C/svg%3E") no-repeat right 4px center, linear-gradient(#f1f1f3, #e3e4e7 50%, #cfd1d8);
    box-shadow: inset 0 0 0 1px #f3f4f5;
}

/* left pane */
.workspace {
    display: flex;
    gap: 5px;
    flex: 1;
    min-height: 0;
    margin-top: 2px;
    border-top: 1px solid #9fa3ac;
    background: #ebebeb;
}
.side {
    display: flex;
    flex-direction: column;
    flex: none;
    width: 259px;
}
.links {
    flex: none;
    padding: 0 2px 1px;
    border: 1px solid #fff;
    border-right-color: #9a9da3;
    white-space: nowrap;
}
.links a {
    margin-right: 9px;
    color: #111;
    text-underline-offset: 2px;
}
.side-scroll {
    display: flex;
    flex: 1;
    min-height: 0;
    border: 1px solid #83888f;
    background: #ebebeb;
}
.side-scroll .vbar {
    width: 17px;
}
.side-content {
    flex: 1;
    overflow: hidden;
}
.side-content h3 {
    display: flex;
    align-items: center;
    gap: 8px;
    height: 25px;
    padding: 0 0 2px 8px;
    border-bottom: 1px solid #9da1aa;
    background: linear-gradient(#e9eaee, #d2d4dc 55%, #b9bdc7);
}
.panel {
    padding: 1px 6px 1px 12px;
}
.field {
    display: flex;
    align-items: center;
    justify-content: space-between;
    height: 20px;
    margin: 0 2px 5px 0;
}
.field .spin {
    width: 150px;
    height: 20px;
}
.field .arrows {
    padding: 0 3px;
}
.field .arrows button {
    width: 13px;
    height: 8px;
    border: 1px solid #70777e;
    border-radius: 2px;
    background: #dfe1e5;
}
.field .arrows button::after {
    background: #111;
}
.scale {
    margin: 8px 0 8px 2px;
}
fieldset {
    min-width: 0;
    margin: 0 0 6px;
    padding: 12px 1px 5px 6px;
    border: 1px solid #c8d2de;
    border-radius: 3px;
    box-shadow: inset 1px 1px 0 #fff;
}
fieldset select {
    display: block;
    width: 100%;
}
legend {
    height: 16px;
    margin-bottom: -8px;
    padding: 0 1px;
}
.pair {
    display: grid;
    grid-template-columns: 1fr 1fr;
}
.plain {
    align-items: center;
    height: 33px;
    margin-bottom: 2px;
    padding-top: 5px;
}
.shape {
    height: 46px;
    padding-top: 10px;
}
.forces {
    display: grid;
    grid-template-columns: 51px 1fr;
    row-gap: 18px;
    padding: 4px 5px 10px 12px;
}
.forces > span {
    padding-top: 5px;
    white-space: nowrap;
}
.keys {
    display: grid;
    grid-template-columns: repeat(6, 26px);
    gap: 2px;
}
.keys button {
    height: 26px;
    border: 1px solid #7f858c;
    border-radius: 3px;
    background: linear-gradient(#f5f5f5, #ececee 50%, #cfd1d5 52%, #e1e2e4);
    box-shadow: inset 0 0 0 1px #f4f4f4;
    font-size: 11px;
    overflow: hidden;
}
.keys .on {
    border-color: #356f9c;
    background: linear-gradient(#c2e4ee, #a3d3e3 50%, #68b4cb 52%, #83c6d8);
    box-shadow: none;
}
.options {
    display: flex;
    justify-content: space-between;
    margin: 0 2px 0 8px;
    padding-top: 10px;
}
.options .check {
    margin-top: 2px;
}
.small {
    width: 21px;
    height: 21px;
    margin-right: 10px;
    border: 1px solid #7f858c;
    border-radius: 3px;
}
.add {
    flex: none;
    height: 24px;
    margin-top: 2px;
    border: 1px solid #83888f;
    border-radius: 3px;
    background: linear-gradient(#f2f2f3, #e6e7ea 45%, #cfd1d8 55%, #d6d8de);
    box-shadow: inset 0 0 0 1px #f4f4f4;
}

/* scroll bars */
.vbar, .hbar {
    display: flex;
    background: #ebecee;
}
.vbar {
    flex-direction: column;
    width: 16px;
}
.vbar button {
    flex: none;
    height: 17px;
}
.hbar button {
    flex: none;
    width: 17px;
}
.vbar button::after, .hbar button::after {
    content: "";
    display: block;
    width: 7px;
    height: 7px;
    margin: auto;
    background: #333;
}
.up::after {
    clip-path: polygon(50% 20%, 100% 80%, 0 80%);
}
.down::after {
    clip-path: polygon(0 20%, 100% 20%, 50% 80%);
}
.left::after {
    clip-path: polygon(20% 50%, 80% 0, 80% 100%);
}
.right::after {
    clip-path: polygon(20% 0, 80% 50%, 20% 100%);
}
.track {
    display: flex;
    flex: 1;
    min-height: 0;
}
.thumb {
    display: flex;
    flex: 1;
    align-items: center;
    justify-content: center;
    border: 1px solid #8d9299;
    border-radius: 2px;
    background: linear-gradient(90deg, #f3f3f5, #d8dade 50%, #c0c4cd);
}
.thumb::after {
    content: "";
    width: 7px;
    height: 8px;
    background: repeating-linear-gradient(#666b73 0 1px, #f2f2f2 1px 3px);
}
.hbar .thumb {
    background: linear-gradient(#f3f3f5, #d8dade 50%, #c0c4cd);
}
.hbar .thumb::after {
    width: 8px;
    height: 7px;
    background: repeating-linear-gradient(90deg, #666b73 0 1px, #f2f2f2 1px 3px);
}
.side-thumb {
    height: 24%;
}
.view-thumb {
    height: 61%;
    margin-top: 48px;
}
.thumb.short {
    flex: none;
    width: 15px;
    height: 15px;
}
.thumb.short::after {
    display: none;
}

/* model view */
.main {
    display: flex;
    flex-direction: column;
    flex: 1;
    min-width: 0;
}
.toolbar {
    display: flex;
    align-items: center;
    flex: none;
    height: 24px;
    border: 1px solid #9a9da3;
    background: linear-gradient(#f8f8f9, #e9ebee 60%, #d2d4d8);
}
.toolbar button {
    display: flex;
    justify-content: center;
    width: 23px;
}
.toolbar svg {
    width: 16px;
    height: 16px;
}
.sep {
    width: 1px;
    height: 18px;
    margin: 0 3px 0 4px;
    background: #9ba0a8;
}
.view {
    display: grid;
    grid-template: minmax(0, 1fr) 17px / minmax(0, 1fr) 16px;
    flex: 1;
    min-height: 0;
    margin-top: 1px;
}
.model {
    width: 100%;
    height: 100%;
    background: #070303;
}
.axis {
    stroke: #4a4954;
}
.cable, .moment {
    fill: none;
    stroke: #a6ce39;
}
.moment {
    stroke: #e8232b;
}
.deck {
    stroke: #a9c3cf;
    stroke-dasharray: 4 2;
}
.node {
    fill: #ee7bb0;
}
.joint {
    fill: #e8843c;
}
.value {
    font: 14px "Liberation Sans", sans-serif;
    fill: #f4a55f;
}
.peak-line {
    stroke: #f4a55f;
}
.sign {
    font: 11px "Noto Sans", sans-serif;
    fill: #e8232b;
}
.sign path {
    fill: none;
    stroke: #e8232b;
}
.sign .tip {
    fill: #e8232b;
}
.sign .member {
    stroke: #84898e;
}
.sign .end {
    fill: #8c9296;
}

/* result table */
.results {
    flex: none;
    margin-top: 3px;
    padding-right: 1px;
    background: #fff;
}
.result-tabs {
    display: flex;
    align-items: flex-end;
    height: 21px;
    padding-left: 2px;
}
.result-tabs button {
    height: 19px;
    padding: 0 5px;
    margin-right: 1px;
    border: 1px solid #83888f;
    border-bottom: 0;
    background: linear-gradient(#ececee, #c4c7ce);
}
.result-tabs button + button {
    padding: 0 4px;
}
.result-tabs button.active {
    height: 22px;
    margin: 0 0 -1px;
    padding: 0 7px 4px;
    background: #fff;
    z-index: 1;
}
.sheet-frame {
    padding: 3px;
    border: 1px solid #83888f;
}
.sheet {
    display: grid;
    grid-template: 144px 16px / minmax(0, 1fr) 16px;
    padding: 1px;
    border: 1px solid #83888f;
    background: #ebecee;
}
.table-clip {
    overflow: hidden;
    background: #fff;
}
table {
    table-layout: fixed;
    width: 819px;
    border-collapse: separate;
    border-spacing: 0;
    font: 11px/16px "Noto Sans", "Noto Sans CJK JP", sans-serif;
}
th, td {
    height: 21px;
    padding: 0 0 0 4px;
    border-right: 1px solid #adb0b5;
    border-bottom: 1px solid #adb0b5;
    font-weight: normal;
    text-align: left;
    white-space: nowrap;
}
th {
    background: #ebebeb;
}
.name {
    width: 104px;
}
.pink td {
    background: #e4c1dc;
}
.pink .selected {
    background: #3e8acb;
    outline: 1px dotted #d98a4a;
    outline-offset: -1px;
}
.status {
    flex: none;
    height: 18px;
    margin-top: 1px;
    background: #ebe8e8;
    border-top: 1px solid #f6f6f6;
    font: 11px/17px "Noto Sans", sans-serif;
}
.status span {
    display: block;
    width: 251px;
    padding-left: 2px;
    border-right: 1px solid #c6c6c9;
}
```
